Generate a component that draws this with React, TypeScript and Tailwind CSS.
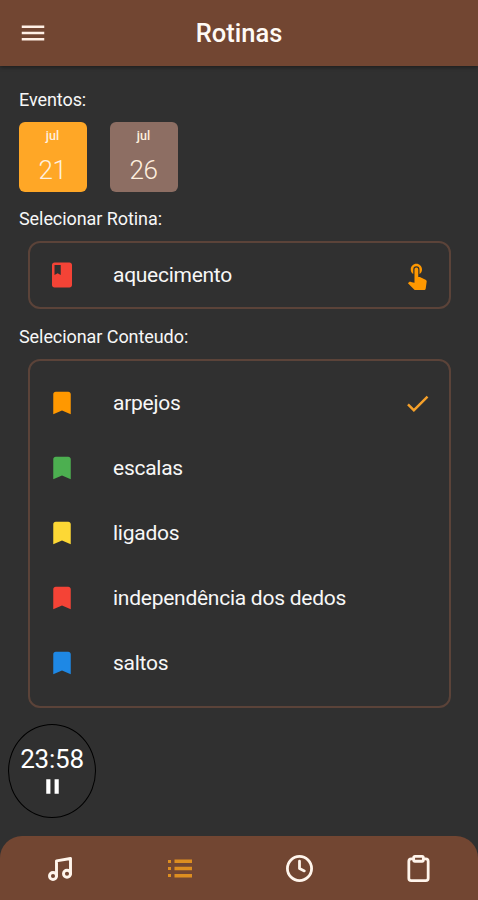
import { MdMenu, MdClass, MdTouchApp, MdCheck, MdBookmark, MdPause } from "react-icons/md";
import { FiMusic, FiClock, FiClipboard } from "react-icons/fi";

const contents = [
  { name: "arpejos", color: "text-[#ff9800]", selected: true },
  { name: "escalas", color: "text-[#4caf50]" },
  { name: "ligados", color: "text-[#fdd835]" },
  { name: "independência dos dedos", color: "text-[#f44336]" },
  { name: "saltos", color: "text-[#1e88e5]" },
];

function EventCard({ month, day, color }: { month: string; day: string; color: string }) {
  return (
    <div className={`flex h-[70.5px] w-[68px] flex-col items-center rounded-md ${color}`}>
      <span className="mt-[6px] text-[12.5px] leading-[16px] font-medium text-[#fff0df]">{month}</span>
      <span className="mt-[10px] text-[26px] leading-[32px] font-light tracking-[-0.3px] text-[#fff0df]">{day}</span>
    </div>
  );
}

function ListIcon() {
  return (
    <svg className="h-[19px] w-[24px]" viewBox="0 0 24 19" fill="currentColor">
      <path d="M0 1h3v3H0zM6.500 .6H24v3.400H6.500zM0 8h3v3H0zM6.500 7.800H24v3.400H6.500zM0 15h3v3H0zM6.500 15H24v3.400H6.500z" />
    </svg>
  );
}

export default function App() {
  return (
    <div className="flex h-[900px] w-[478px] flex-col overflow-hidden bg-[#303030] font-['Roboto',sans-serif] text-[#f7f7f7]">
      <header className="grid h-[65.5px] shrink-0 grid-cols-[64px_1fr_64px] items-center bg-[#724632] shadow-[0_1px_4px_rgba(0,0,0,0.45)]">
        <MdMenu className="ml-[18px] size-[30px] text-[#fff0e6]" />
        <h1 className="text-center text-[25.5px] leading-[32px] font-medium text-[#fffaf5]">Rotinas</h1>
      </header>

      <main className="flex grow flex-col">
        <h2 className="mt-[22px] ml-[19px] text-[18px] leading-[24px] tracking-[-0.07px]">Eventos:</h2>
        <div className="mt-[10px] ml-[18.5px] flex gap-[23px]">
          <EventCard month="jul" day="21" color="bg-[#ffa726]" />
          <EventCard month="jul" day="26" color="bg-[#8d6e63]" />
        </div>

        <h2 className="mt-[15px] ml-[19px] text-[18px] leading-[24px] tracking-[-0.07px]">Selecionar Rotina:</h2>
        <div className="mt-[10px] mr-[27px] ml-[28px] flex h-[68px] items-center rounded-xl border-2 border-[#5b4339] pr-[17px] pl-[17px]">
          <MdClass className="size-[30px] text-[#f44336]" />
          <span className="ml-[36px] grow text-[21px] leading-[28px] tracking-[-0.28px]">aquecimento</span>
          <MdTouchApp className="size-[30px] text-[#ff9800]" />
        </div>

        <h2 className="mt-[16px] ml-[19px] text-[18px] leading-[24px] tracking-[-0.07px]">Selecionar Conteudo:</h2>
        <div className="mt-[10px] mr-[27px] ml-[28px] flex h-[349px] flex-col rounded-xl border-2 border-[#5b4339] pt-[9.5px]">
          {contents.map((item) => (
            <div key={item.name} className="flex h-[65px] items-center px-[17px]">
              <MdBookmark className={`size-[30px] ${item.color}`} />
              <span className="ml-[36px] grow text-[21px] leading-[28px] tracking-[-0.26px]">{item.name}</span>
              {item.selected && <MdCheck className="size-[29px] text-[#f5a02a]" />}
            </div>
          ))}
        </div>

        <div className="mt-[16px] ml-[8px] flex h-[94px] w-[88px] flex-col items-center rounded-[50%] border border-black">
          <span className="mt-[18px] text-[26px] leading-[32px] tracking-[-0.2px] text-white">23:58</span>
          <MdPause className="-mt-[1px] size-[25px] text-white" />
        </div>
      </main>

      <nav className="grid h-[64.5px] shrink-0 grid-cols-4 items-center justify-items-center rounded-t-[22px] bg-[#724632] pt-[2px] pl-px text-[#fff5ec]">
        <FiMusic className="-ml-[2px] size-[28px] stroke-[2.5px]" />
        <span className="text-[#dd8e20]"><ListIcon /></span>
        <FiClock className="size-[29px] stroke-[2.3px]" />
        <FiClipboard className="size-[29px] stroke-[2.3px]" />
      </nav>
    </div>
  );
}
